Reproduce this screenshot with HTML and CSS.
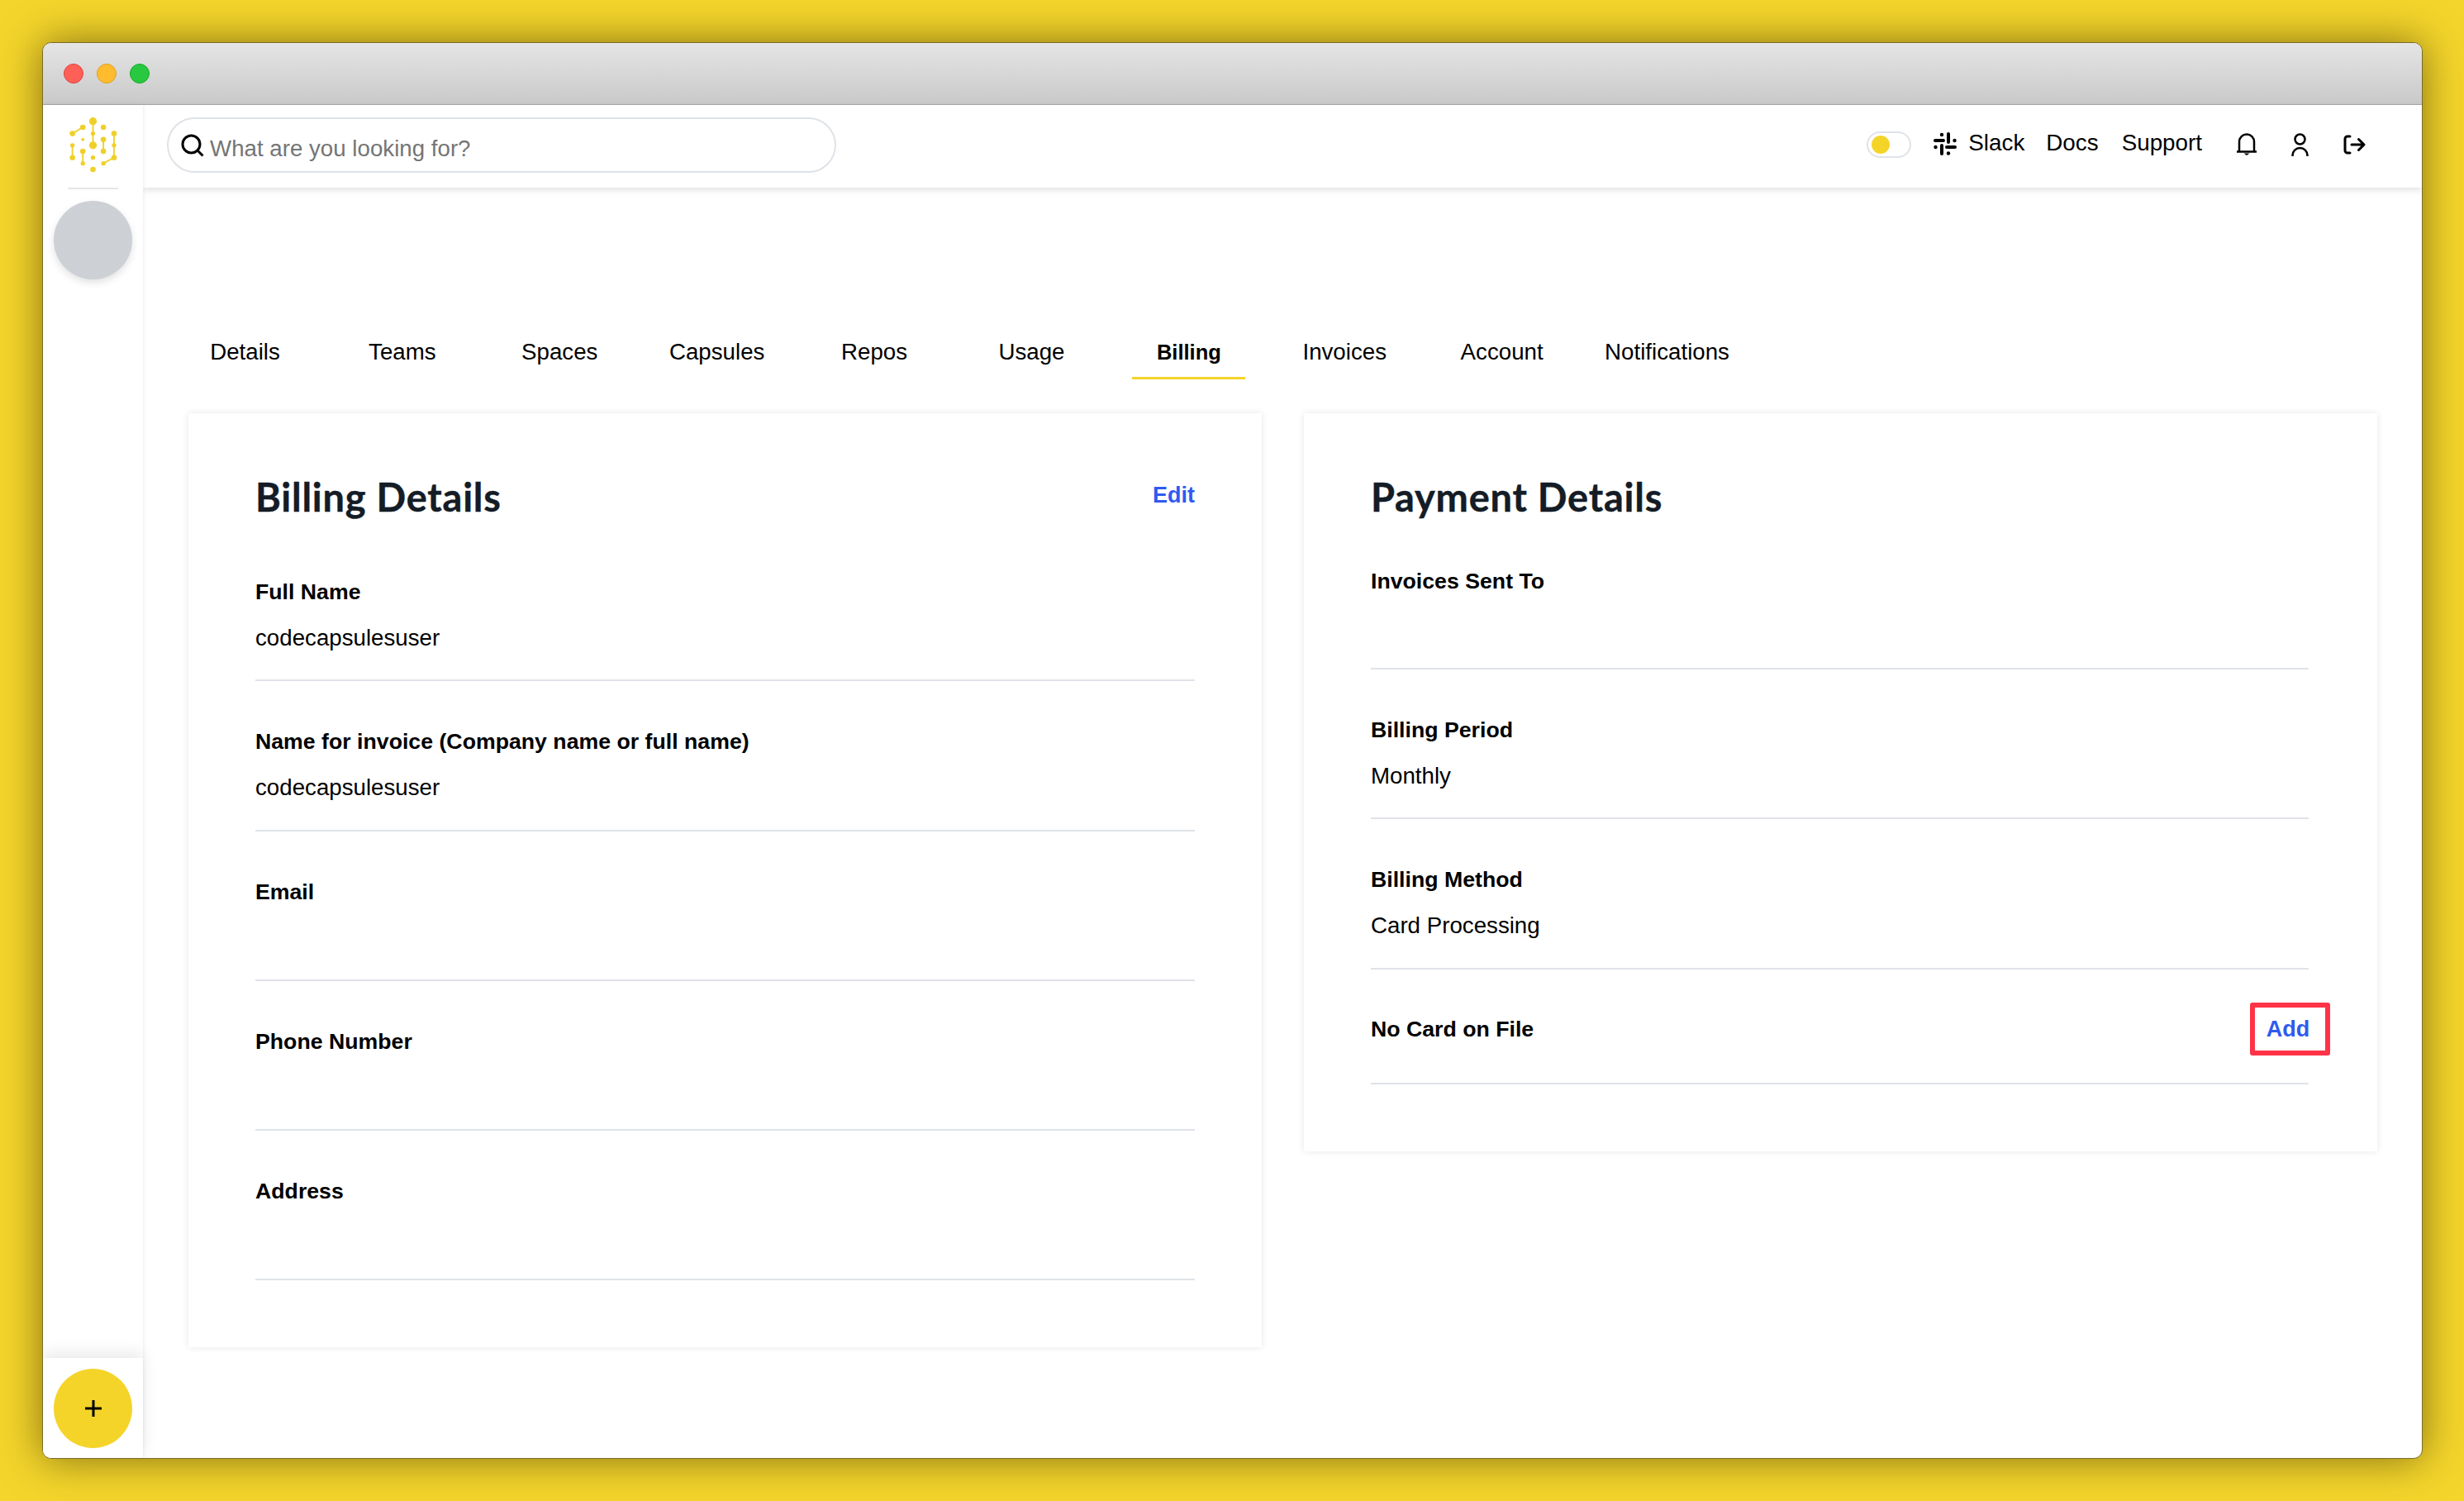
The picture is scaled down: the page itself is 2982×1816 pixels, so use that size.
FILE: index.html
```html
<!DOCTYPE html>
<html lang="en">
<head>
  <meta charset="UTF-8">
  <meta name="viewport" content="width=device-width, initial-scale=1.0">
  <title>Billing</title>
  <link rel="stylesheet" href="styles.css">
</head>
<body>
  <div class="window">
    <div class="titlebar">
      <span class="light light-red"></span>
      <span class="light light-amber"></span>
      <span class="light light-green"></span>
    </div>

    <div class="app">
      <aside class="sidebar">
        <svg class="logo" viewBox="66 36 178 202">
          <g class="logo-lines">
            <path d="M155 50V138M118 72L80 95M232 95V183L193 204M193 117V160M80 138V183M118 160V204"/>
          </g>
          <g class="logo-dots">
            <circle cx="155" cy="50" r="14"/>
            <circle cx="155" cy="95" r="8"/>
            <circle cx="155" cy="138" r="14"/>
            <circle cx="118" cy="72" r="10"/>
            <circle cx="80" cy="95" r="10"/>
            <circle cx="193" cy="72" r="10"/>
            <circle cx="232" cy="95" r="10"/>
            <circle cx="232" cy="138" r="8"/>
            <circle cx="232" cy="183" r="10"/>
            <circle cx="118" cy="117" r="6"/>
            <circle cx="193" cy="117" r="10"/>
            <circle cx="193" cy="160" r="10"/>
            <circle cx="80" cy="138" r="8"/>
            <circle cx="80" cy="183" r="10"/>
            <circle cx="118" cy="160" r="10"/>
            <circle cx="118" cy="204" r="8"/>
            <circle cx="155" cy="183" r="8"/>
            <circle cx="193" cy="204" r="8"/>
            <circle cx="155" cy="226" r="10"/>
          </g>
        </svg>
        <div class="sidebar-rule"></div>
        <div class="avatar"></div>
        <div class="sidebar-foot">
          <button type="button" class="add-btn">
            <svg class="add-icon" viewBox="0 0 20 20"><path d="M0 10H20M10 0V20"/></svg>
          </button>
        </div>
      </aside>

      <main class="main">
        <header class="topbar">
          <div class="search">
            <svg class="search-icon" viewBox="0 0 28 28"><circle cx="12.500" cy="12.500" r="10.500"/><path d="M20 20L26.500 26.500"/></svg>
            <span class="search-text">What are you looking for?</span>
          </div>
          <div class="topbar-right">
            <div class="toggle"><span class="toggle-knob"></span></div>
            <a class="nav-link nav-slack">
              <svg class="slack-icon" viewBox="0 0 28 28">
                <path d="M2 10H12M18 2V12M16 18H26M10 16V26"/>
                <circle cx="10" cy="3" r="2.200"/>
                <circle cx="25.500" cy="10" r="2.200"/>
                <circle cx="18" cy="25.500" r="2.200"/>
                <circle cx="2.500" cy="18" r="2.200"/>
              </svg>
              Slack
            </a>
            <a class="nav-link">Docs</a>
            <a class="nav-link">Support</a>
            <div class="nav-icons">
              <svg class="icon-bell" viewBox="0 0 26 27">
                <path d="M4 22V10.500a9 9 0 0 1 18 0V22M1 22.500H25"/>
                <path class="icon-fill" d="M9.500 24.500h7l-3.500 2.500z"/>
              </svg>
              <svg class="icon-user" viewBox="0 0 21 28">
                <circle cx="10.500" cy="7.500" r="6"/>
                <path d="M1.500 28v-1a9 9 0 0 1 18 0v1"/>
              </svg>
              <svg class="icon-logout" viewBox="0 0 28 24">
                <path d="M9 2H6a3 3 0 0 0-3 3V19a3 3 0 0 0 3 3H9M11 12H25M19.500 5.500L26 12L19.500 18.500"/>
              </svg>
            </div>
          </div>
        </header>

        <section class="content">
          <nav class="tabs">
            <a class="tab">Details</a>
            <a class="tab">Teams</a>
            <a class="tab">Spaces</a>
            <a class="tab">Capsules</a>
            <a class="tab">Repos</a>
            <a class="tab">Usage</a>
            <a class="tab tab-active">Billing</a>
            <a class="tab tab-invoices">Invoices</a>
            <a class="tab tab-account">Account</a>
            <a class="tab tab-notifications">Notifications</a>
          </nav>

          <div class="cards">
            <div class="card">
              <div class="card-head">
                <h2 class="card-title">Billing Details</h2>
                <a class="action">Edit</a>
              </div>
              <div class="field">
                <div class="field-label">Full Name</div>
                <div class="field-value">codecapsulesuser</div>
              </div>
              <div class="field">
                <div class="field-label">Name for invoice (Company name or full name)</div>
                <div class="field-value">codecapsulesuser</div>
              </div>
              <div class="field">
                <div class="field-label">Email</div>
                <div class="field-value"></div>
              </div>
              <div class="field">
                <div class="field-label">Phone Number</div>
                <div class="field-value"></div>
              </div>
              <div class="field">
                <div class="field-label">Address</div>
                <div class="field-value"></div>
              </div>
            </div>

            <div class="card card-payment">
              <div class="card-head">
                <h2 class="card-title">Payment Details</h2>
              </div>
              <div class="field field-first">
                <div class="field-label">Invoices Sent To</div>
                <div class="field-value"></div>
              </div>
              <div class="field">
                <div class="field-label">Billing Period</div>
                <div class="field-value">Monthly</div>
              </div>
              <div class="field">
                <div class="field-label">Billing Method</div>
                <div class="field-value">Card Processing</div>
              </div>
              <div class="card-row">
                <div class="field-label">No Card on File</div>
                <a class="action action-marked">Add</a>
              </div>
            </div>
          </div>
        </section>
      </main>
    </div>
  </div>
</body>
</html>
```

FILE: styles.css
```css
* {
  box-sizing: border-box;
}

html,
body {
  height: 100%;
}

body {
  margin: 0;
  padding: 51px 50px 51px 51px;
  background-color: #f4d52b;
  color: #000;
  font-family: "Liberation Sans", Arial, sans-serif;
  font-size: 27.700px;
}

a {
  color: inherit;
  text-decoration: none;
}

svg {
  display: block;
  fill: none;
  stroke: #000;
}

.window {
  display: flex;
  flex-direction: column;
  height: 100%;
  overflow: hidden;
  background-color: #fff;
  border: 1px solid #7a6b25;
  border-radius: 11px;
  box-shadow: 0 0 50px rgba(50, 40, 0, 0.58);
}

.titlebar {
  display: flex;
  flex-shrink: 0;
  align-items: center;
  gap: 16px;
  height: 75px;
  padding: 0 0 0 25px;
  background: linear-gradient(#e5e5e5, #c9c9c9);
  border-bottom: 1px solid #a9a9a9;
}

.light {
  width: 24px;
  height: 24px;
  border-radius: 50%;
}

.light-red {
  background-color: #fe5f57;
  border: 1px solid #e0443e;
}

.light-amber {
  background-color: #febc2e;
  border: 1px solid #dea123;
}

.light-green {
  background-color: #28c840;
  border: 1px solid #1aab29;
}

.app {
  display: flex;
  flex: 1;
  min-height: 0;
}

.sidebar {
  position: relative;
  z-index: 2;
  display: flex;
  flex-direction: column;
  flex-shrink: 0;
  align-items: center;
  width: 121px;
  padding-top: 15px;
  background-color: #fff;
  box-shadow: 0 0 5px rgba(0, 0, 0, 0.1);
}

.logo {
  width: 59px;
  height: 67px;
}

.logo-lines {
  stroke: #f0d335;
  stroke-width: 6;
}

.logo-dots circle {
  fill: #efd02a;
  stroke: none;
}

.sidebar-rule {
  width: 61px;
  height: 2px;
  margin-top: 18px;
  background-color: #e4e6e9;
}

.avatar {
  width: 95px;
  height: 95px;
  margin-top: 14px;
  background-color: #cdd0d5;
  border-radius: 50%;
  box-shadow: 0 4px 10px rgba(0, 0, 0, 0.12);
}

.sidebar-foot {
  display: flex;
  justify-content: center;
  width: 100%;
  height: 121px;
  margin-top: auto;
  padding-top: 13px;
  background-color: #fff;
  box-shadow: 0 -6px 18px rgba(0, 0, 0, 0.09);
}

.add-btn {
  display: flex;
  align-items: center;
  justify-content: center;
  width: 95px;
  height: 96px;
  padding: 0;
  background-color: #f5d42a;
  border: none;
  border-radius: 50%;
  cursor: pointer;
}

.add-icon {
  width: 20px;
  height: 20px;
  stroke-width: 3;
}

.main {
  display: flex;
  flex: 1;
  flex-direction: column;
  min-width: 0;
}

.topbar {
  position: relative;
  z-index: 1;
  display: flex;
  flex-shrink: 0;
  align-items: center;
  justify-content: space-between;
  height: 100px;
  padding: 0 68px 3px 29px;
  background-color: #fff;
  box-shadow: 0 3px 8px rgba(0, 0, 0, 0.12);
}

.search {
  display: flex;
  align-items: center;
  gap: 7px;
  width: 810px;
  height: 67px;
  padding-left: 15px;
  border: 2px solid #dfe3e8;
  border-radius: 34px;
}

.search-icon {
  width: 28px;
  height: 28px;
  stroke-width: 3;
}

.search-text {
  padding-top: 8px;
  color: #757575;
}

.topbar-right {
  display: flex;
  align-items: center;
  gap: 28px;
  margin-top: -2px;
}

.toggle {
  display: flex;
  align-items: center;
  width: 54px;
  height: 32px;
  padding-left: 4px;
  border: 2px solid #dfe3e8;
  border-radius: 16px;
}

.toggle-knob {
  width: 22px;
  height: 22px;
  background-color: #f5d42a;
  border-radius: 50%;
}

.nav-link {
  display: flex;
  align-items: center;
  margin-top: -4px;
  font-size: 27.800px;
}

.nav-slack {
  gap: 14px;
  margin-left: -1px;
  margin-right: -2px;
}

.slack-icon {
  width: 28px;
  height: 28px;
  margin-top: 2px;
  stroke-width: 4;
  stroke-linecap: round;
}

.slack-icon circle {
  fill: #000;
  stroke: none;
}

.nav-icons {
  display: flex;
  align-items: center;
  gap: 41px;
  margin-left: 13px;
}

.icon-bell {
  width: 26px;
  height: 27px;
  stroke-width: 2.500;
}

.icon-fill {
  fill: #000;
  stroke: none;
}

.icon-user {
  width: 21px;
  height: 28px;
  stroke-width: 2.500;
}

.icon-logout {
  width: 28px;
  height: 24px;
  stroke-width: 3;
  stroke-linecap: round;
  stroke-linejoin: round;
}

.content {
  flex: 1;
  padding: 182px 53px 0 55px;
}

.tabs {
  display: flex;
  gap: 53.400px;
  margin-bottom: 41px;
}

.tab {
  width: 137px;
  padding-bottom: 13px;
  border-bottom: 3px solid transparent;
  line-height: 34px;
  text-align: center;
}

.tab-active {
  border-bottom-color: #f5d42a;
  font-size: 25.500px;
  font-weight: 700;
}

.tab-invoices {
  margin-left: -2px;
}

.tab-account {
  margin-left: 0;
}

.tab-notifications {
  width: 160px;
  margin-left: -2px;
}

.cards {
  display: grid;
  grid-template-columns: 1299px 1299px;
  gap: 51px;
  align-items: start;
}

.card {
  padding: 60px 81px 81px 81px;
  background-color: #fff;
  box-shadow: 0 0 8px rgba(0, 0, 0, 0.1);
}

.card-payment {
  padding-right: 83px;
}

.card-head {
  display: flex;
  align-items: center;
  justify-content: space-between;
  height: 82px;
  margin-bottom: 1px;
}

.card-title {
  margin: 0;
  color: #141c26;
  font-family: Lato, "Liberation Sans", sans-serif;
  font-size: 47px;
  font-weight: 700;
  letter-spacing: 0.750px;
  -webkit-text-stroke: 0.400px #141c26;
}

.action {
  margin-top: -4px;
  color: #2f5af0;
  font-size: 27px;
  font-weight: 700;
}

.action-marked {
  display: flex;
  align-items: center;
  justify-content: center;
  width: 97px;
  height: 64px;
  margin-top: 0;
  margin-right: -26px;
  padding: 2px 5px 0 0;
  border: 6px solid #ff3347;
  border-radius: 3px;
}

.field {
  height: 181.300px;
  padding-top: 56px;
  border-bottom: 2px solid #dfe3e8;
}

.field-first {
  height: 167px;
  padding-top: 43px;
}

.field-label {
  font-size: 26.700px;
  font-weight: 700;
  line-height: 34px;
}

.field-value {
  min-height: 34px;
  margin-top: 22px;
  line-height: 34px;
}

.card-row {
  display: flex;
  align-items: center;
  justify-content: space-between;
  height: 139px;
  padding-top: 7px;
  border-bottom: 2px solid #dfe3e8;
}
```
